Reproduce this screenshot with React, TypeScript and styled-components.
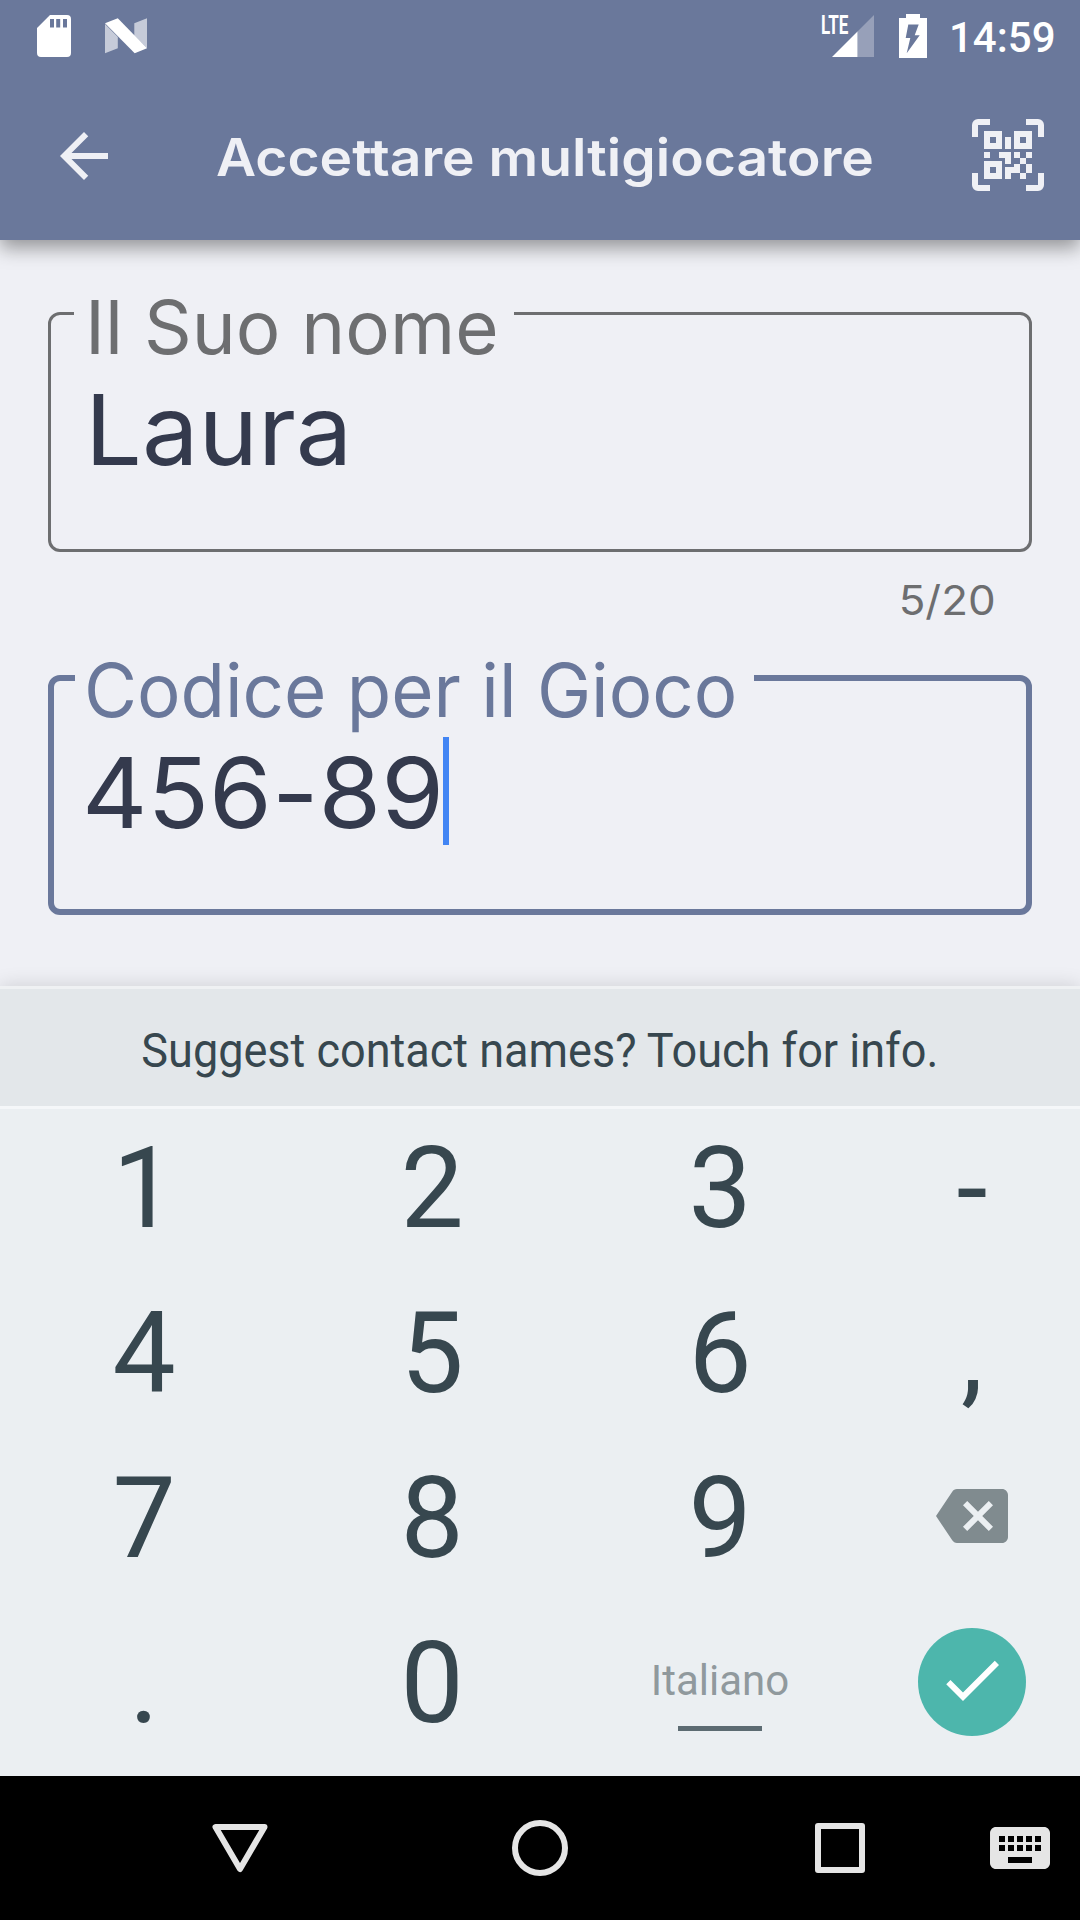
import React from "react";
import styled, { createGlobalStyle } from "styled-components";

const GlobalStyle = createGlobalStyle`
  * { box-sizing: border-box; }
  body { margin: 0; background: #eff0f5; }
`;

const display = `Inter, "Liberation Sans", sans-serif`;
const system = `Roboto, "Liberation Sans", sans-serif`;

const Screen = styled.div`
  display: flex;
  flex-direction: column;
  width: 1080px;
  height: 1920px;
  overflow: hidden;
  background: #eff0f5;
  font-family: ${system};
`;

const Header = styled.header`
  flex: none;
  height: 240px;
  background: #6a789b;
  box-shadow: 0 8px 18px rgba(0, 0, 0, 0.38);
`;

const StatusBar = styled.div`
  display: flex;
  justify-content: space-between;
  height: 72px;
  padding: 0 24.5px 0 37px;
`;

const StatusGroup = styled.div`
  display: flex;
  align-items: flex-start;
`;

const StatusIcon = styled.svg<{ $gap?: number }>`
  display: block;
  flex: none;
  margin-left: ${(p) => p.$gap ?? 0}px;
`;

const NetworkType = styled.span`
  width: 11px;
  margin-top: 10px;
  color: #fff;
  font-size: 26px;
  font-weight: 700;
  line-height: 30px;
  white-space: nowrap;
  transform: scaleX(0.654);
  transform-origin: 0 50%;
`;

const Clock = styled.time`
  margin: 14px 0 0 22px;
  color: #fff;
  font-size: 42px;
  font-weight: 500;
  line-height: 48px;
`;

const AppBar = styled.div`
  display: flex;
  align-items: center;
  height: 168px;
  padding: 0 36px 0 48px;
`;

const IconButton = styled.button<{ $lift?: number }>`
  display: flex;
  flex: none;
  width: 72px;
  height: 72px;
  margin-bottom: ${(p) => (p.$lift ?? 0) * 2}px;
  padding: 0;
  border: 0;
  background: none;
  color: #eff0f5;
`;

const Title = styled.h1`
  flex: 1;
  margin: 4px 0 0 96px;
  color: #eff0f5;
  font-family: ${display};
  font-size: 52px;
  font-weight: 600;
  line-height: 64px;
  white-space: nowrap;
  transform: scaleX(1.061);
  transform-origin: 0 50%;
`;

const Form = styled.main`
  flex: none;
  height: 746px;
  padding: 72px 48px 0;
`;

const Outline = styled.fieldset<{ $focused?: boolean }>`
  position: relative;
  height: 240px;
  min-width: 0;
  margin: 0;
  padding: 0;
  border: ${(p) => (p.$focused ? "6px solid #6a789b" : "3px solid #6d6e70")};
  border-radius: 12px;
  color: ${(p) => (p.$focused ? "#6a789b" : "#6d6e70")};
`;

const Notch = styled.legend<{ $width: number; $inset: number }>`
  width: ${(p) => p.$width}px;
  height: 0;
  margin-left: ${(p) => p.$inset}px;
  padding: 0;
`;

const FloatingLabel = styled.label<{ $top: number; $left: number; $stretch: number }>`
  position: absolute;
  top: ${(p) => p.$top}px;
  left: ${(p) => p.$left}px;
  font-family: ${display};
  font-size: 74px;
  line-height: 90px;
  white-space: nowrap;
  transform: scaleX(${(p) => p.$stretch});
  transform-origin: 0 50%;
`;

const Value = styled.div<{ $top: number; $left: number }>`
  display: flex;
  align-items: flex-start;
  padding: ${(p) => p.$top}px 0 0 ${(p) => p.$left}px;
`;

const ValueText = styled.span<{ $width: number; $stretch: number }>`
  width: ${(p) => p.$width}px;
  margin-top: 1px;
  color: #343a4d;
  font-family: ${display};
  font-size: 98px;
  font-feature-settings: "calt" 0;
  line-height: 118px;
  white-space: nowrap;
  transform: scaleX(${(p) => p.$stretch});
  transform-origin: 0 50%;
`;

const Caret = styled.span`
  width: 6px;
  height: 108px;
  margin-top: 4px;
  background: #4285f4;
`;

const Counter = styled.div`
  height: 123px;
  padding: 24px 36.5px 0 0;
  color: #6d6e70;
  font-family: ${display};
  font-size: 41px;
  line-height: 48px;
  text-align: right;
`;

const CounterText = styled.span`
  display: inline-block;
  transform: scaleX(1.07);
  transform-origin: 100% 50%;
`;

const Keyboard = styled.section`
  display: flex;
  flex: none;
  flex-direction: column;
  height: 790px;
  background: #ebeff2;
  box-shadow: 0 -1px 18px rgba(0, 0, 0, 0.13);
`;

const Suggestion = styled.div`
  display: flex;
  flex: none;
  align-items: center;
  justify-content: center;
  height: 123px;
  border-top: 3px solid #eff1f3;
  border-bottom: 3px solid #f5f7f9;
  background: #e3e7ea;
`;

const SuggestionText = styled.span`
  margin-top: 7px;
  color: #37474f;
  font-size: 48px;
  line-height: 56px;
  white-space: nowrap;
  transform: scaleX(0.938);
`;

const Keypad = styled.div`
  display: grid;
  grid-template-columns: 288px 288px 288px 216px;
  grid-template-rows: 160px 165px 165px 165px;
`;

const Key = styled.button`
  display: flex;
  flex-direction: column;
  align-items: center;
  justify-content: flex-end;
  padding: 0;
  border: 0;
  background: none;
  color: #37474f;
  font-family: ${system};
  font-size: 112.5px;
  line-height: 160px;
`;

const SpaceKey = styled(Key)`
  color: #90999d;
  font-size: 42px;
  line-height: 50px;
`;

const SpaceBar = styled.span`
  width: 84px;
  height: 5px;
  margin: 20px 0 33px;
  background: #5c6b72;
`;

const ActionKey = styled(Key)<{ $lift?: number }>`
  justify-content: center;
  padding-bottom: ${(p) => (p.$lift ?? 0) * 2}px;
  color: #808b8f;
`;

const EnterDisc = styled.span`
  display: flex;
  align-items: center;
  justify-content: center;
  width: 108px;
  height: 108px;
  padding: 0 1px 4px 0;
  border-radius: 50%;
  background: #4db6ac;
  color: #fff;
`;

const NavBar = styled.nav`
  display: grid;
  flex: none;
  grid-template-columns: 300px 300px 300px 60px;
  align-items: center;
  justify-items: center;
  height: 144px;
  padding: 0 30px 0 90px;
  background: #000;
  color: #e5e5e5;
`;

const NavIcon = styled.svg`
  display: block;
  width: 72px;
  height: 72px;
  fill: none;
  stroke: currentColor;
  stroke-width: 6px;
  stroke-linejoin: round;
`;

const Glyph = ({ d }: { d: string }) => (
  <svg width="72" height="72" viewBox="0 0 24 24" fill="currentColor">
    <path d={d} />
  </svg>
);

const arrowBack = "M20 11H7.83l5.59-5.59L12 4l-8 8 8 8 1.41-1.41L7.83 13H20v-2z";
const backspace =
  "M22 3H7c-.69 0-1.23.35-1.59.88L0 12l5.41 8.11c.36.53.9.89 1.59.89h15c1.1 0 2-.9 2-2V5c0-1.1-.9-2-2-2zm-3 12.59L17.59 17 14 13.41 10.41 17 9 15.59 12.59 12 9 8.41 10.41 7 14 10.59 17.59 7 19 8.41 15.41 12 19 15.59z";
const check = "M9 16.17L4.83 12l-1.42 1.41L9 19 21 7l-1.41-1.41z";
const keyboard =
  "M20 5H4c-1.1 0-1.99.9-1.99 2L2 17c0 1.1.9 2 2 2h16c1.1 0 2-.9 2-2V7c0-1.1-.9-2-2-2zm-9 3h2v2h-2V8zm0 3h2v2h-2v-2zM8 8h2v2H8V8zm0 3h2v2H8v-2zm-1 2H5v-2h2v2zm0-3H5V8h2v2zm9 7H8v-2h8v2zm0-4h-2v-2h2v2zm0-3h-2V8h2v2zm3 3h-2v-2h2v2zm0-3h-2V8h2v2z";

const SdCard = () => (
  <StatusIcon width="34" height="58" viewBox="0 0 34 58" fill="#fff">
    <path
      fillRule="evenodd"
      d="M13 15H30a4 4 0 0 1 4 4V53a4 4 0 0 1-4 4H4a4 4 0 0 1-4-4V28zM13 19v8.5h4V19zM19.2 19v8.5h4V19zM26 19v8.5h4V19z"
    />
  </StatusIcon>
);

const NougatMark = () => (
  <StatusIcon $gap={34} width="42" height="58" viewBox="0 0 42 58" fill="#fff">
    <path opacity=".62" d="M0 24L12.8 37v11.3L0 53.3zM29.3 23.3L42 18.3V48.3L29.3 35.7z" />
    <path d="M0 23.3L12.8 18.3 42 48.3 29.7 53.3z" />
  </StatusIcon>
);

const Signal = () => (
  <StatusIcon width="42" height="58" viewBox="0 0 42 58" fill="#fff">
    <path opacity=".3" d="M25.5 31.5L42 15V57H25.5z" />
    <path d="M0 57L25.5 31.5V57z" />
  </StatusIcon>
);

const Battery = () => (
  <StatusIcon $gap={25} width="28" height="58" viewBox="0 0 28 58" fill="#fff">
    <path
      fillRule="evenodd"
      d="M7 14h14v4h7v40H0V18h7zM9.3 24.6L6.7 38h4.6L7.7 53.3 20.7 35.2h-5L19.7 24.6z"
    />
  </StatusIcon>
);

const QrScanner = () => (
  <svg width="72" height="72" viewBox="0 0 72 72" fill="currentColor">
    <path d="M0 18V6a6 6 0 0 1 6-6h12v6H6v12zM54 0h12a6 6 0 0 1 6 6v12h-6V6H54zM0 54h6v12h12v6H6a6 6 0 0 1-6-6zM66 54h6v12a6 6 0 0 1-6 6H54v-6h12z" />
    <path
      fillRule="evenodd"
      d="M12 12h18v18H12zM18 18v6h6v-6zM42 12h18v18H42zM48 18v6h6v-6zM12 42h18v18H12zM18 48v6h6v-6z"
    />
    <path d="M33 18h6v12h-6zM12 33h6v6h-6zM27 33h12v12h-6v-6h-6zM42 33h6v6h-6zM54 33h6v6h-6zM48 39h6v6h-6zM42 45h6v9h-9v6h-6V48h9zM54 45h6v9h-6zM48 54h6v6h-6z" />
  </svg>
);

const keyLabels = ["1", "2", "3", "-", "4", "5", "6", ",", "7", "8", "9"];

export default function App() {
  return (
    <>
      <GlobalStyle />
      <Screen>
        <Header>
          <StatusBar>
            <StatusGroup>
              <SdCard />
              <NougatMark />
            </StatusGroup>
            <StatusGroup>
              <NetworkType>LTE</NetworkType>
              <Signal />
              <Battery />
              <Clock>14:59</Clock>
            </StatusGroup>
          </StatusBar>
          <AppBar>
            <IconButton aria-label="Indietro">
              <Glyph d={arrowBack} />
            </IconButton>
            <Title>Accettare multigiocatore</Title>
            <IconButton aria-label="QR" $lift={1}>
              <QrScanner />
            </IconButton>
          </AppBar>
        </Header>

        <Form>
          <Outline>
            <Notch $width={440} $inset={23} />
            <FloatingLabel $top={-33} $left={33.7} $stretch={1.006}>
              Il Suo nome
            </FloatingLabel>
            <Value $top={55} $left={34}>
              <ValueText $width={270} $stretch={1.027}>
                Laura
              </ValueText>
            </Value>
          </Outline>
          <Counter>
            <CounterText>5/20</CounterText>
          </Counter>
          <Outline $focused>
            <Notch $width={679} $inset={21} />
            <FloatingLabel $top={-36} $left={30} $stretch={0.981}>
              Codice per il Gioco
            </FloatingLabel>
            <Value $top={52} $left={28}>
              <ValueText $width={361} $stretch={1.034}>
                456-89
              </ValueText>
              <Caret />
            </Value>
          </Outline>
        </Form>

        <Keyboard>
          <Suggestion>
            <SuggestionText>Suggest contact names? Touch for info.</SuggestionText>
          </Suggestion>
          <Keypad>
            {keyLabels.map((label) => (
              <Key key={label}>{label}</Key>
            ))}
            <ActionKey aria-label="Cancella" $lift={1}>
              <Glyph d={backspace} />
            </ActionKey>
            <Key>.</Key>
            <Key>0</Key>
            <SpaceKey>
              Italiano
              <SpaceBar />
            </SpaceKey>
            <ActionKey aria-label="Invio">
              <EnterDisc>
                <Glyph d={check} />
              </EnterDisc>
            </ActionKey>
          </Keypad>
        </Keyboard>

        <NavBar>
          <NavIcon viewBox="0 0 72 72">
            <path d="M11.5 15H60.5L36 57z" />
          </NavIcon>
          <NavIcon viewBox="0 0 72 72">
            <circle cx="36" cy="36" r="25" />
          </NavIcon>
          <NavIcon viewBox="0 0 72 72">
            <rect x="14" y="14" width="44" height="44" />
          </NavIcon>
          <Glyph d={keyboard} />
        </NavBar>
      </Screen>
    </>
  );
}
